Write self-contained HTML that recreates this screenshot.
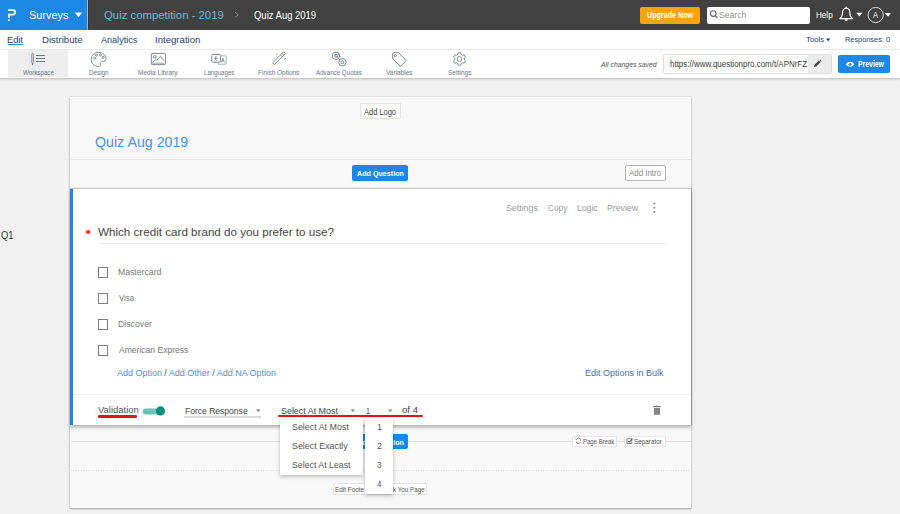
<!DOCTYPE html>
<html><head><meta charset="utf-8">
<style>
html,body{margin:0;padding:0;width:900px;height:514px;overflow:hidden;background:#f1f1f1;font-family:"Liberation Sans",sans-serif;}
.a{position:absolute;}
.t{position:absolute;white-space:nowrap;line-height:1;font-family:"Liberation Sans",sans-serif;}
svg{position:absolute;overflow:visible;}
</style></head><body>
<!-- top bar -->
<div class="a" style="left:0;top:0;width:900px;height:30px;background:#414141"></div>
<div class="a" style="left:0;top:0;width:87px;height:30px;background:#1c87e5"></div>
<div class="a" style="left:87px;top:0;width:1px;height:30px;background:#a9b6c2"></div>
<div class="a" style="left:88px;top:0;width:1px;height:30px;background:#353535"></div>
<svg style="left:0;top:0" width="900" height="30">
  <!-- P logo -->
  <path d="M8,10.05 H12.9 A2.3,2.3 0 0 1 12.9,14.65 H8.9 V17.7" fill="none" stroke="#fff" stroke-width="1.75"/>
  <rect x="8" y="19.3" width="1.8" height="1.6" fill="#fff"/>
  <!-- caret surveys -->
  <path d="M74.7,12.6 H82.2 L78.45,17.2 Z" fill="#fff"/>
  <!-- breadcrumb chevron -->
  <path d="M235,12.2 L238.3,14.8 L235,17.4" fill="none" stroke="#8a8a8a" stroke-width="1"/>
</svg>
<div class="a" style="left:640px;top:7px;width:60px;height:17px;background:#ffa203;border-radius:2px"></div>
<div class="a" style="left:707px;top:7px;width:103px;height:17px;background:#fff;border-radius:2px"></div>
<svg style="left:0;top:0" width="900" height="30">
  <!-- search icon -->
  <circle cx="713.2" cy="13.6" r="2.8" fill="none" stroke="#666" stroke-width="1.1"/>
  <path d="M715.2,15.6 L717.4,17.8" stroke="#666" stroke-width="1.3"/>
  <!-- bell -->
  <path d="M839.8,18.6 C842,17.2 842.6,15.6 842.6,12.6 C842.6,10 844.2,8.2 846.2,8.2 C848.2,8.2 849.8,10 849.8,12.6 C849.8,15.6 850.4,17.2 852.6,18.6 Z" fill="none" stroke="#fff" stroke-width="1.1" stroke-linejoin="round"/>
  <path d="M844.6,19.2 A1.6,1.9 0 0 0 847.8,19.2 Z" fill="#fff"/>
  <circle cx="846.2" cy="7.3" r="0.9" fill="#fff"/>
  <path d="M856.3,12.8 H862.4 L859.35,16.6 Z" fill="#fff"/>
  <!-- avatar -->
  <circle cx="875.7" cy="15" r="7.6" fill="none" stroke="#e0e0e0" stroke-width="0.95"/>
  <path d="M885,13 H891 L888,16.7 Z" fill="#fff"/>
</svg>

<!-- nav row -->
<div class="a" style="left:0;top:30px;width:900px;height:19px;background:#fff;border-bottom:1px solid #ececec"></div>
<div class="a" style="left:8.2px;top:44px;width:15.1px;height:1px;background:#1c87e5"></div>
<svg style="left:0;top:0" width="900" height="50">
  <path d="M826,38.6 H830.4 L828.2,41.2 Z" fill="#26416e"/>
</svg>

<!-- toolbar -->
<div class="a" style="left:0;top:50px;width:900px;height:28px;background:#fff;box-shadow:0 1px 2px rgba(0,0,0,0.25)"></div>
<div class="a" style="left:8px;top:50px;width:60px;height:27px;background:#ededed"></div>
<svg style="left:0;top:0" width="900" height="80" fill="none" stroke="#707b88" stroke-width="0.9">
  <!-- workspace -->
  <path d="M31.8,54.2 Q31.8,53.3 32.6,53.3 Q33.4,53.3 33.4,54.2 V62.4 L32.6,64.6 L31.8,62.4 Z" stroke-width="0.85"/>
  <path d="M32.6,63.6 V65.2" stroke-width="0.9"/>
  <path d="M36,55.5 H45.1 M36,58.5 H45.1 M36,61.5 H45.1" stroke-width="1"/>
  <!-- design palette -->
  <path d="M98.5,52.3 C102.8,52.3 106,55.2 106,58.6 C106,61 104.3,61.6 102.6,61.4 C101,61.2 100.2,62.4 100.6,63.8 C101,65.3 100.2,66.5 98.5,66.5 C94.5,66.5 91.2,63.3 91.2,59.4 C91.2,55.5 94.5,52.3 98.5,52.3 Z"/>
  <circle cx="94.6" cy="58.2" r="1"/><circle cx="96.6" cy="55.2" r="1"/><circle cx="100.4" cy="55" r="1"/><circle cx="103.2" cy="57.4" r="1"/>
  <!-- media library -->
  <rect x="151.4" y="53.4" width="14" height="11.2" rx="0.7"/>
  <path d="M152.4,63.3 H164.4" stroke="#b3bac3" stroke-width="1.4"/>
  <circle cx="154.8" cy="56.9" r="1.35"/>
  <path d="M152.6,62.4 L155.8,59.6 L156.9,60.2 L160.4,56.2 L163.9,60.6"/>
  <!-- languages -->
  <rect x="211.8" y="54.5" width="8.6" height="7.7" rx="0.8"/>
  <path d="M220.4,55.9 H225.4 Q226.2,55.9 226.2,56.7 V63.4 Q226.2,64.2 225.4,64.2 H218.5 Q217.7,64.2 217.7,63.4 V62.2" stroke="#9aa3ae"/>
  <circle cx="215.8" cy="56.9" r="0.75" fill="#707b88" stroke="none"/>
  <path d="M213.9,58.3 H217.7 M215.8,57.9 V59.4 M214.5,60.9 L215.8,59.4 L217.1,60.9" stroke-width="0.8"/>
  <path d="M221.3,62.4 L222.9,58.2 L224.5,62.4 M221.9,61 H223.9" stroke-width="0.8"/>
  <!-- finish options wand -->
  <path d="M272.6,62.8 L283.7,51.7 L285.5,53.5 L274.4,64.6 Z" stroke-linejoin="round"/>
  <path d="M280.5,54.9 L282.3,56.7 M282,53.4 L283.8,55.2" stroke-width="0.8"/>
  <path d="M277,53.3 L277.5,54.3 L278.4,54.6 L277.5,55 L277,56 L276.5,55 L275.6,54.6 L276.5,54.3 Z" fill="#b4bcc6" stroke="none"/>
  <path d="M283.8,58.2 L285.8,58.2 L284.6,60 Z" fill="#8a94a0" stroke="none"/>
  <!-- advance quotas chain -->
  <circle cx="336" cy="55.8" r="3.7"/><circle cx="336" cy="55.8" r="1.5"/>
  <circle cx="342.4" cy="62.3" r="3.7"/><circle cx="342.4" cy="62.3" r="1.5"/>
  <path d="M335.2,55 L339.6,59.4 M337.6,53.8 L340.6,56.8" stroke-width="0.8"/>
  <!-- variables tag -->
  <path d="M392.7,59 V54 Q392.7,52.7 394,52.7 H398.6 L405.7,60.1 Q406.1,60.6 405.7,61.1 L400.6,66.3 Z" stroke-linejoin="round"/>
  <circle cx="395.4" cy="55.6" r="1.1"/>
</svg>
<svg style="left:0;top:0" width="900" height="80">
  <path d="M457.90,54.37 L458.19,52.84 L460.81,52.84 L461.10,54.37 L462.71,55.30 L464.18,54.78 L465.49,57.05 L464.31,58.07 L464.31,59.93 L465.49,60.95 L464.18,63.22 L462.71,62.70 L461.10,63.63 L460.81,65.16 L458.19,65.16 L457.90,63.63 L456.29,62.70 L454.82,63.22 L453.51,60.95 L454.69,59.93 L454.69,58.07 L453.51,57.05 L454.82,54.78 L456.29,55.30 Z" fill="none" stroke="#707b88" stroke-width="0.9" stroke-linejoin="round"/>
  <circle cx="459.5" cy="59.0" r="2.4" fill="none" stroke="#707b88" stroke-width="0.9"/>
</svg>
<!-- url input -->
<div class="a" style="left:663px;top:54px;width:167px;height:18px;background:#fff;border:1px solid #dcdcdc;border-radius:2px"></div>
<div class="a" style="left:808px;top:55px;width:23px;height:18px;background:#ececec;border-radius:0 1px 1px 0"></div>
<svg style="left:0;top:0" width="900" height="80">
  <path d="M814.6,67.6 L815.2,65.4 L819.4,61.2 L821,62.8 L816.8,67 Z M819.9,60.7 L820.6,60 L822.2,61.6 L821.5,62.3 Z" fill="#444" transform="translate(-0.6,-0.6)"/>
</svg>
<div class="a" style="left:838px;top:54.9px;width:52.2px;height:18.1px;background:#1c87e5;border-radius:2px"></div>
<svg style="left:0;top:0" width="900" height="80">
  <path d="M845.8,64.2 C847.6,60.9 852.4,60.9 854.2,64.2 C852.4,67.5 847.6,67.5 845.8,64.2 Z" fill="#fff"/>
  <circle cx="850" cy="64.2" r="1.5" fill="#1c87e5"/>
  <circle cx="849.5" cy="63.7" r="0.5" fill="#fff"/>
</svg>

<!-- outer card -->
<div class="a" style="left:70px;top:97px;width:619px;height:409px;background:#f8f8f8;border:1px solid #fff;box-shadow:0 1px 2px rgba(0,0,0,0.3),0 0 1px rgba(0,0,0,0.25)"></div>
<div class="a" style="left:360.3px;top:103.2px;width:38.3px;height:13.6px;background:#fff;border:1px solid #e3e3e3"></div>
<div class="a" style="left:70.5px;top:159px;width:620px;height:1px;background:#e4e4e4"></div>
<div class="a" style="left:352.4px;top:165px;width:55.6px;height:16px;background:#1c87e5;border-radius:2px"></div>
<div class="a" style="left:624.8px;top:165.2px;width:39px;height:13.6px;background:#fff;border:1px solid #b5b5b5;border-radius:2px"></div>

<!-- lower area -->
<div class="a" style="left:70.5px;top:441px;width:620px;height:1px;background:#e2e2e2"></div>
<div class="a" style="left:70.5px;top:470px;width:620px;height:1px;background:repeating-linear-gradient(to right,#dedede 0 1px,transparent 1px 2.5px)"></div>
<div class="a" style="left:352.4px;top:433.6px;width:55.6px;height:15.4px;background:#1c87e5;border-radius:2px"></div>
<div class="a" style="left:572.4px;top:435.5px;width:42.4px;height:9.5px;background:#fff;border:1px solid #e6e6e6"></div>
<div class="a" style="left:623.8px;top:435.5px;width:40px;height:9.5px;background:#fff;border:1px solid #e6e6e6"></div>
<div class="a" style="left:332.7px;top:483.3px;width:92.6px;height:9.7px;background:#fff;border:1px solid #e3e3e3"></div>
<svg style="left:0;top:0" width="900" height="514" fill="none" stroke="#555" stroke-width="0.8">
  <path d="M575.4,438.6 l1.2,1.2 M577.2,438.4 a2.1,2.1 0 0 1 3.2,2.4 M576.2,441.6 a2.1,2.1 0 0 0 3.4,1.4 M580.2,442.4 l1,1"/>
  <rect x="627" y="438.8" width="4.8" height="4.8" stroke="#666"/>
  <path d="M628,440.8 l1.3,1.5 l3.2,-3.6" stroke="#333" stroke-width="1"/>
</svg>

<!-- question card -->
<div class="a" style="left:70px;top:188px;width:621px;height:236px;background:#fff;border-top:1px solid #c4c4c4;box-shadow:1px 0 1px rgba(0,0,0,0.2),0 2.5px 3px rgba(0,0,0,0.26)"></div>
<div class="a" style="left:70px;top:189px;width:2.5px;height:236px;background:#1c87e5"></div>
<svg style="left:0;top:0" width="900" height="514">
  <circle cx="654.4" cy="203.6" r="1" fill="#8a8a8a"/>
  <circle cx="654.4" cy="207.8" r="1" fill="#8a8a8a"/>
  <circle cx="654.4" cy="212" r="1" fill="#8a8a8a"/>
  <path d="M88.1,229.4 V234.6 M85.8,230.7 L90.4,233.3 M85.8,233.3 L90.4,230.7" stroke="#ff2a2a" stroke-width="1.1"/>
  <circle cx="88.1" cy="232" r="1.3" fill="#ff1a1a"/>
</svg>
<div class="a" style="left:97.9px;top:243px;width:568px;height:1px;background:#ececec"></div>
<div class="a" style="left:97.9px;top:267px;width:8.2px;height:8.7px;border:1px solid #7c7c7c"></div>
<div class="a" style="left:97.9px;top:293px;width:8.2px;height:8.7px;border:1px solid #7c7c7c"></div>
<div class="a" style="left:97.9px;top:319px;width:8.2px;height:8.7px;border:1px solid #7c7c7c"></div>
<div class="a" style="left:97.9px;top:345px;width:8.2px;height:8.7px;border:1px solid #7c7c7c"></div>
<div class="a" style="left:72.5px;top:394px;width:618.5px;height:1px;background:#efefef"></div>
<svg style="left:0;top:0" width="900" height="514">
  <!-- trash -->
  <rect x="653.1" y="406" width="7.7" height="1.1" fill="#7c7c7c"/>
  <rect x="655.9" y="405.3" width="2.1" height="0.8" fill="#aaa"/>
  <rect x="653.9" y="407.9" width="6.1" height="6.9" fill="#858585"/>
  <!-- toggle -->
  <rect x="142.8" y="408.5" width="18" height="6" rx="3" fill="#6fc2b8"/>
  <circle cx="160.5" cy="410.9" r="4.6" fill="#0d8f80"/>
  <!-- carets -->
  <path d="M256,409.6 H260.4 L258.2,412 Z" fill="#7a7a7a"/>
  <path d="M350.7,409.6 H355.1 L352.9,412 Z" fill="#7a7a7a"/>
  <path d="M388,409.6 H392.4 L390.2,412 Z" fill="#7a7a7a"/>
</svg>
<div class="a" style="left:97.8px;top:415.2px;width:39.7px;height:2.6px;background:#e3131d;border-radius:1.3px"></div>
<div class="a" style="left:184px;top:416.2px;width:76.5px;height:1.5px;background:#dadada"></div>
<div class="a" style="left:277.5px;top:414.7px;width:145.4px;height:2.5px;background:#e3131d;border-radius:1.2px"></div>

<div class="t" style="left:29.31px;top:10px;font-size:10.8px;letter-spacing:0.000px;color:#ffffff;font-weight:normal;font-style:normal;transform:scaleX(1.0099);transform-origin:0 0;">Surveys</div>
<div class="t" style="left:104.19px;top:10px;font-size:10.8px;letter-spacing:0.000px;color:#6cb8dc;font-weight:normal;font-style:normal;transform:scaleX(1.0506);transform-origin:0 0;">Quiz competition - 2019</div>
<div class="t" style="left:253.87px;top:10px;font-size:10.6px;letter-spacing:0.000px;color:#ffffff;font-weight:normal;font-style:normal;transform:scaleX(0.8938);transform-origin:0 0;">Quiz Aug 2019</div>
<div class="t" style="left:646.57px;top:11px;font-size:8.9px;letter-spacing:0.000px;color:#ffffff;font-weight:bold;font-style:normal;transform:scaleX(0.8077);transform-origin:0 0;">Upgrade Now</div>
<div class="t" style="left:719.31px;top:10px;font-size:9.9px;letter-spacing:0.000px;color:#8c8c8c;font-weight:normal;font-style:normal;transform:scaleX(0.8696);transform-origin:0 0;">Search</div>
<div class="t" style="left:816.05px;top:11px;font-size:8.9px;letter-spacing:0.000px;color:#ffffff;font-weight:normal;font-style:normal;transform:scaleX(0.9117);transform-origin:0 0;">Help</div>
<div class="t" style="left:873.30px;top:11px;font-size:8.9px;letter-spacing:0.000px;color:#ffffff;font-weight:normal;font-style:normal;transform:scaleX(0.8448);transform-origin:0 0;">A</div>
<div class="t" style="left:7.46px;top:35px;font-size:9.9px;letter-spacing:0.000px;color:#23406f;font-weight:normal;font-style:normal;transform:scaleX(0.9329);transform-origin:0 0;">Edit</div>
<div class="t" style="left:42.13px;top:35px;font-size:9.9px;letter-spacing:0.000px;color:#23406f;font-weight:normal;font-style:normal;transform:scaleX(0.9707);transform-origin:0 0;">Distribute</div>
<div class="t" style="left:101.00px;top:35px;font-size:9.9px;letter-spacing:0.000px;color:#23406f;font-weight:normal;font-style:normal;transform:scaleX(0.9171);transform-origin:0 0;">Analytics</div>
<div class="t" style="left:155.13px;top:35px;font-size:9.9px;letter-spacing:0.000px;color:#23406f;font-weight:normal;font-style:normal;transform:scaleX(0.9725);transform-origin:0 0;">Integration</div>
<div class="t" style="left:806.14px;top:36px;font-size:7.4px;letter-spacing:0.000px;color:#23406f;font-weight:normal;font-style:normal;transform:scaleX(1.0491);transform-origin:0 0;">Tools</div>
<div class="t" style="left:845.41px;top:36px;font-size:7.4px;letter-spacing:0.000px;color:#23406f;font-weight:normal;font-style:normal;transform:scaleX(0.9955);transform-origin:0 0;">Responses: 0</div>
<div class="t" style="left:22.67px;top:69px;font-size:7.4px;letter-spacing:0.000px;color:#6b7686;font-weight:normal;font-style:normal;transform:scaleX(0.8388);transform-origin:0 0;">Workspace</div>
<div class="t" style="left:88.50px;top:69px;font-size:7.4px;letter-spacing:0.000px;color:#6b7686;font-weight:normal;font-style:normal;transform:scaleX(0.8523);transform-origin:0 0;">Design</div>
<div class="t" style="left:138.48px;top:69px;font-size:7.4px;letter-spacing:0.000px;color:#6b7686;font-weight:normal;font-style:normal;transform:scaleX(0.8813);transform-origin:0 0;">Media Library</div>
<div class="t" style="left:203.51px;top:69px;font-size:7.4px;letter-spacing:0.000px;color:#6b7686;font-weight:normal;font-style:normal;transform:scaleX(0.8301);transform-origin:0 0;">Languages</div>
<div class="t" style="left:258.18px;top:69px;font-size:7.4px;letter-spacing:0.000px;color:#6b7686;font-weight:normal;font-style:normal;transform:scaleX(0.8743);transform-origin:0 0;">Finish Options</div>
<div class="t" style="left:316.30px;top:69px;font-size:7.4px;letter-spacing:0.000px;color:#6b7686;font-weight:normal;font-style:normal;transform:scaleX(0.8391);transform-origin:0 0;">Advance Quotas</div>
<div class="t" style="left:385.97px;top:69px;font-size:7.4px;letter-spacing:0.000px;color:#6b7686;font-weight:normal;font-style:normal;transform:scaleX(0.8798);transform-origin:0 0;">Variables</div>
<div class="t" style="left:447.71px;top:69px;font-size:7.4px;letter-spacing:0.000px;color:#6b7686;font-weight:normal;font-style:normal;transform:scaleX(0.8792);transform-origin:0 0;">Settings</div>
<div class="t" style="left:601.34px;top:61px;font-size:7.4px;letter-spacing:0.000px;color:#505050;font-weight:normal;font-style:italic;transform:scaleX(0.9267);transform-origin:0 0;">All changes saved</div>
<div class="t" style="left:670.34px;top:60px;font-size:8.9px;letter-spacing:0.000px;color:#3a3a3a;font-weight:normal;font-style:normal;transform:scaleX(0.8966);transform-origin:0 0;">https://www.questionpro.com/t/APNrFZ</div>
<div class="t" style="left:857.55px;top:60px;font-size:8.9px;letter-spacing:0.000px;color:#ffffff;font-weight:bold;font-style:normal;transform:scaleX(0.7732);transform-origin:0 0;">Preview</div>
<div class="t" style="left:364.40px;top:108px;font-size:8.9px;letter-spacing:0.000px;color:#3a3a3a;font-weight:normal;font-style:normal;transform:scaleX(0.8427);transform-origin:0 0;">Add Logo</div>
<div class="t" style="left:95.06px;top:135px;font-size:14.8px;letter-spacing:0.000px;color:#4d92e0;font-weight:normal;font-style:normal;transform:scaleX(0.9608);transform-origin:0 0;">Quiz Aug 2019</div>
<div class="t" style="left:356.82px;top:170px;font-size:8.0px;letter-spacing:0.000px;color:#ffffff;font-weight:bold;font-style:normal;transform:scaleX(0.8945);transform-origin:0 0;">Add Question</div>
<div class="t" style="left:629.20px;top:169px;font-size:8.9px;letter-spacing:0.000px;color:#8a8a8a;font-weight:normal;font-style:normal;transform:scaleX(0.8899);transform-origin:0 0;">Add Intro</div>
<div class="t" style="left:506.00px;top:204px;font-size:8.9px;letter-spacing:0.000px;color:#9a9a9a;font-weight:normal;font-style:normal;transform:scaleX(0.9917);transform-origin:0 0;">Settings</div>
<div class="t" style="left:547.58px;top:204px;font-size:8.9px;letter-spacing:0.000px;color:#9a9a9a;font-weight:normal;font-style:normal;transform:scaleX(0.9343);transform-origin:0 0;">Copy</div>
<div class="t" style="left:576.91px;top:204px;font-size:8.9px;letter-spacing:0.000px;color:#9a9a9a;font-weight:normal;font-style:normal;transform:scaleX(0.9736);transform-origin:0 0;">Logic</div>
<div class="t" style="left:606.90px;top:204px;font-size:8.9px;letter-spacing:0.000px;color:#9a9a9a;font-weight:normal;font-style:normal;transform:scaleX(0.9815);transform-origin:0 0;">Preview</div>
<div class="t" style="left:97.84px;top:227px;font-size:10.8px;letter-spacing:0.000px;color:#444444;font-weight:normal;font-style:normal;transform:scaleX(1.0773);transform-origin:0 0;">Which credit card brand do you prefer to use?</div>
<div class="t" style="left:118.20px;top:268px;font-size:8.9px;letter-spacing:0.000px;color:#777777;font-weight:normal;font-style:normal;transform:scaleX(0.9766);transform-origin:0 0;">Mastercard</div>
<div class="t" style="left:118.86px;top:294px;font-size:8.9px;letter-spacing:0.000px;color:#777777;font-weight:normal;font-style:normal;transform:scaleX(0.8837);transform-origin:0 0;">Visa</div>
<div class="t" style="left:117.90px;top:320px;font-size:8.9px;letter-spacing:0.000px;color:#777777;font-weight:normal;font-style:normal;transform:scaleX(0.9843);transform-origin:0 0;">Discover</div>
<div class="t" style="left:118.60px;top:346px;font-size:8.9px;letter-spacing:0.000px;color:#777777;font-weight:normal;font-style:normal;transform:scaleX(0.9623);transform-origin:0 0;">American Express</div>
<div class="t" style="left:116.70px;top:369px;font-size:8.9px;letter-spacing:0.000px;color:#4a8fe0;font-weight:normal;font-style:normal;transform:scaleX(1.0104);transform-origin:0 0;">Add Option <span style="color:#555">/</span> Add Other <span style="color:#555">/</span> Add NA Option</div>
<div class="t" style="left:584.88px;top:369px;font-size:8.9px;letter-spacing:0.000px;color:#4d6ca8;font-weight:normal;font-style:normal;transform:scaleX(1.0138);transform-origin:0 0;">Edit Options in Bulk</div>
<div class="t" style="left:97.75px;top:405px;font-size:9.9px;letter-spacing:0.000px;color:#555555;font-weight:normal;font-style:normal;transform:scaleX(0.9566);transform-origin:0 0;">Validation</div>
<div class="t" style="left:185.12px;top:406px;font-size:9.9px;letter-spacing:0.000px;color:#444444;font-weight:normal;font-style:normal;transform:scaleX(0.8644);transform-origin:0 0;">Force Response</div>
<div class="t" style="left:280.60px;top:406px;font-size:9.9px;letter-spacing:0.000px;color:#444444;font-weight:normal;font-style:normal;transform:scaleX(0.9018);transform-origin:0 0;">Select At Most</div>
<div class="t" style="left:366.37px;top:406px;font-size:9.9px;letter-spacing:0.000px;color:#444444;font-weight:normal;font-style:normal;transform:scaleX(0.7198);transform-origin:0 0;">1</div>
<div class="t" style="left:401.52px;top:405px;font-size:9.9px;letter-spacing:0.000px;color:#444444;font-weight:normal;font-style:normal;transform:scaleX(0.9689);transform-origin:0 0;">of 4</div>
<div class="t" style="left:582.52px;top:438px;font-size:7.4px;letter-spacing:0.000px;color:#505050;font-weight:normal;font-style:normal;transform:scaleX(0.8116);transform-origin:0 0;">Page Break</div>
<div class="t" style="left:634.01px;top:438px;font-size:7.4px;letter-spacing:0.000px;color:#505050;font-weight:normal;font-style:normal;transform:scaleX(0.8614);transform-origin:0 0;">Separator</div>
<div class="t" style="left:356.82px;top:439px;font-size:8.0px;letter-spacing:0.000px;color:#ffffff;font-weight:bold;font-style:normal;transform:scaleX(0.8945);transform-origin:0 0;">Add Question</div>
<div class="t" style="left:335.49px;top:486px;font-size:7.4px;letter-spacing:0.000px;color:#555555;font-weight:normal;font-style:normal;transform:scaleX(0.8663);transform-origin:0 0;">Edit Foote</div>
<div class="t" style="left:392.89px;top:486px;font-size:7.4px;letter-spacing:0.000px;color:#555555;font-weight:normal;font-style:normal;transform:scaleX(0.8463);transform-origin:0 0;">k You Page</div>
<div class="t" style="left:1.33px;top:230px;font-size:10.8px;letter-spacing:0.000px;color:#333333;font-weight:normal;font-style:normal;transform:scaleX(0.8664);transform-origin:0 0;">Q1</div>

<!-- menus -->
<div class="a" style="left:279.8px;top:419px;width:83.5px;height:55.8px;background:#fff;box-shadow:0 2px 4px rgba(0,0,0,0.22),0 0 2px rgba(0,0,0,0.08)"></div>
<div class="a" style="left:364.6px;top:418px;width:28.1px;height:75.9px;background:#fff;box-shadow:0 2px 4px rgba(0,0,0,0.22),0 0 2px rgba(0,0,0,0.08)"></div>
<div class="t" style="left:292.10px;top:422px;font-size:9.9px;letter-spacing:0.000px;color:#555555;font-weight:normal;font-style:normal;transform:scaleX(0.9002);transform-origin:0 0;">Select At Most</div>
<div class="t" style="left:292.10px;top:441px;font-size:9.9px;letter-spacing:0.000px;color:#555555;font-weight:normal;font-style:normal;transform:scaleX(0.8991);transform-origin:0 0;">Select Exactly</div>
<div class="t" style="left:292.10px;top:460px;font-size:9.9px;letter-spacing:0.000px;color:#555555;font-weight:normal;font-style:normal;transform:scaleX(0.8880);transform-origin:0 0;">Select At Least</div>
<div class="t" style="left:376.91px;top:422px;font-size:9.9px;letter-spacing:0.000px;color:#555555;font-weight:normal;font-style:normal;transform:scaleX(0.9288);transform-origin:0 0;">1</div>
<div class="t" style="left:377.16px;top:441px;font-size:9.9px;letter-spacing:0.000px;color:#555555;font-weight:normal;font-style:normal;transform:scaleX(0.8880);transform-origin:0 0;">2</div>
<div class="t" style="left:377.26px;top:460px;font-size:9.9px;letter-spacing:0.000px;color:#555555;font-weight:normal;font-style:normal;transform:scaleX(0.8506);transform-origin:0 0;">3</div>
<div class="t" style="left:377.44px;top:479px;font-size:9.9px;letter-spacing:0.000px;color:#555555;font-weight:normal;font-style:normal;transform:scaleX(0.8001);transform-origin:0 0;">4</div>
</body></html>
